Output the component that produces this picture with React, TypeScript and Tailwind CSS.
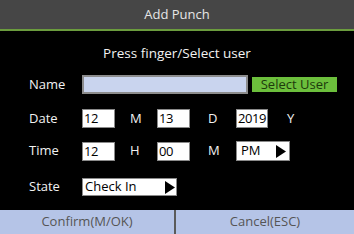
import React from "react";

function Arrow() {
  return (
    <svg width="10" height="13" viewBox="0 0 10 13" className="shrink-0">
      <polygon points="0,0 10,6.5 0,13" fill="#000" />
    </svg>
  );
}

function Box({ value, w }: { value: string; w: string }) {
  return (
    <div
      className={`${w} h-[19px] bg-white border border-[#8a8a8a] text-black text-[13px] leading-[17px] pl-[1px] tracking-[-0.4px] flex items-center overflow-hidden`}
    >
      {value}
    </div>
  );
}

function Label({ text }: { text: string }) {
  return <div className="w-[82px] pl-[29px] text-[13px] text-[#f2f2f2]">{text}</div>;
}

export default function App() {
  return (
    <div
      className="w-[354px] h-[234px] bg-black flex flex-col overflow-hidden"
      style={{ fontFamily: '"Open Sans", "Noto Sans", sans-serif' }}
    >
      <div className="h-[31px] bg-[#464646] border-b-2 border-[#6b9c3e] flex items-center justify-center text-[13px] text-[#e6e6e6]">
        Add Punch
      </div>

      <div className="mt-[12px] h-[20px] leading-[20px] text-center text-[13.5px] text-[#f2f2f2]">
        Press finger/Select user
      </div>

      <div className="mt-[12px] h-[19px] flex items-center">
        <Label text="Name" />
        <div className="w-[166px] h-[19px] bg-[#c9d4ee] border-2 border-[#8c8c8c]" />
        <div className="ml-[4px] w-[85px] h-[15px] bg-[#6cbf3c] text-[13px] leading-[15px] text-[#1d3a0c] text-center">
          Select User
        </div>
      </div>

      <div className="mt-[15px] h-[19px] flex items-center">
        <Label text="Date" />
        <Box value="12" w="w-[33px]" />
        <div className="ml-[15px] w-[12px] text-[13px] text-[#f2f2f2]">M</div>
        <div className="ml-[15px]">
          <Box value="13" w="w-[33px]" />
        </div>
        <div className="ml-[18px] w-[12px] text-[13px] text-[#f2f2f2]">D</div>
        <div className="ml-[16px]">
          <Box value="2019" w="w-[32px]" />
        </div>
        <div className="ml-[19px] text-[13px] text-[#f2f2f2]">Y</div>
      </div>

      <div className="mt-[13px] h-[20px] flex items-center">
        <Label text="Time" />
        <Box value="12" w="w-[33px]" />
        <div className="ml-[15px] w-[12px] text-[13px] text-[#f2f2f2]">H</div>
        <div className="ml-[15px]">
          <Box value="00" w="w-[33px]" />
        </div>
        <div className="ml-[18px] w-[12px] text-[13px] text-[#f2f2f2]">M</div>
        <div className="ml-[16px] w-[54px] h-[20px] bg-white border border-[#8a8a8a] text-black text-[13px] pl-[4px] pr-[3px] flex items-center justify-between">
          <span>PM</span>
          <Arrow />
        </div>
      </div>

      <div className="mt-[17px] h-[18px] flex items-center">
        <Label text="State" />
        <div className="w-[95px] h-[18px] bg-white border border-[#8a8a8a] text-black text-[13px] pl-[2px] pr-[1px] flex items-center justify-between">
          <span>Check In</span>
          <Arrow />
        </div>
      </div>

      <div className="mt-auto h-[24px] bg-[#b5c4e7] flex text-[13px] text-[#555]">
        <div className="w-[176px] flex items-center justify-center border-r-2 border-[#5a5a5a]">
          Confirm(M/OK)
        </div>
        <div className="flex-1 flex items-center justify-center">Cancel(ESC)</div>
      </div>
    </div>
  );
}
